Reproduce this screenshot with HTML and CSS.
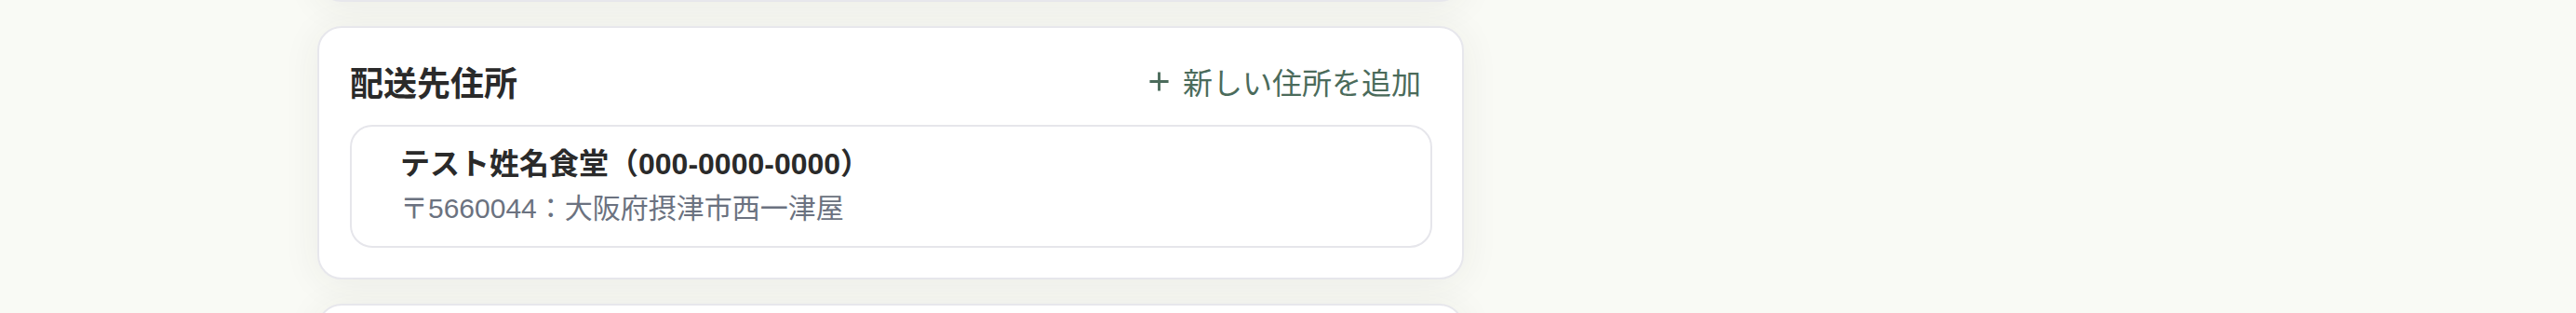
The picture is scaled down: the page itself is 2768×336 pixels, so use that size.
FILE: index.html
```html
<!DOCTYPE html>
<html lang="ja">
<head>
  <meta charset="UTF-8">
  <meta name="viewport" content="width=device-width, initial-scale=1.0">
  <title>配送先住所</title>
  <link rel="stylesheet" href="styles.css">
</head>
<body>
  <div class="page">
    <main class="stack">
      <section class="card card-prev"></section>

      <section class="card">
        <div class="card-header">
          <h2>配送先住所</h2>
          <button class="add-btn" type="button">
            <svg class="plus" viewBox="0 0 24 24" width="24" height="24">
              <path d="M12 1.5v21M1.5 12h21" stroke="currentColor" stroke-width="3" fill="none"/>
            </svg>
            <span>新しい住所を追加</span>
          </button>
        </div>

        <div class="address">
          <p class="address-name">テスト姓名食堂（000-0000-0000）</p>
          <p class="address-line">〒5660044：大阪府摂津市西一津屋</p>
        </div>
      </section>

      <section class="card card-next"></section>
    </main>
    <aside class="side"></aside>
  </div>
</body>
</html>
```

FILE: styles.css
```css
html, body {
  height: 336px;
}

body {
  margin: 0px;
  background-color: #f9faf5;
  font-family: 'Liberation Sans', 'Noto Sans CJK JP', sans-serif;
  color: #2a2a2a;
  overflow: hidden;
}

h2, p {
  margin: 0px;
}

.page {
  display: grid;
  grid-template-columns: 1232px 1fr;
  padding-left: 341px;
}

.stack {
  display: flex;
  flex-direction: column;
  gap: 26px;
  margin-top: -100px;
}

.card {
  background-color: #ffffff;
  border: 2px solid #e7e7ec;
  border-radius: 26px;
  box-shadow: 0 4px 40px rgba(60, 60, 40, 0.07);
  padding: 32px 32px 32px 33px;
}

.card-prev {
  height: 34px;
}

.card-next {
  height: 120px;
}

.card-header {
  display: flex;
  justify-content: space-between;
  align-items: center;
  height: 50px;
  margin-bottom: 22px;
}

.card-header h2 {
  font-family: 'Noto Sans CJK JP', sans-serif;
  font-size: 36px;
  font-weight: bold;
  color: #2a2a2a;
  line-height: 50px;
}

.add-btn {
  display: flex;
  align-items: center;
  gap: 14px;
  border: none;
  background: none;
  padding: 0px 12px 0px 0px;
  font-family: 'Noto Sans CJK JP', sans-serif;
  font-size: 32px;
  color: #4b6b5b;
  cursor: pointer;
}

.plus {
  display: block;
  width: 23px;
  height: 23px;
}

.address {
  border: 2px solid #e6e6eb;
  border-radius: 24px;
  padding: 16px 32px 16px 52px;
}

.address-name {
  font-size: 32px;
  font-weight: bold;
  line-height: 48px;
  color: #2a2a2a;
}

.address-line {
  font-size: 30px;
  line-height: 48px;
  color: #6b7280;
}
```
